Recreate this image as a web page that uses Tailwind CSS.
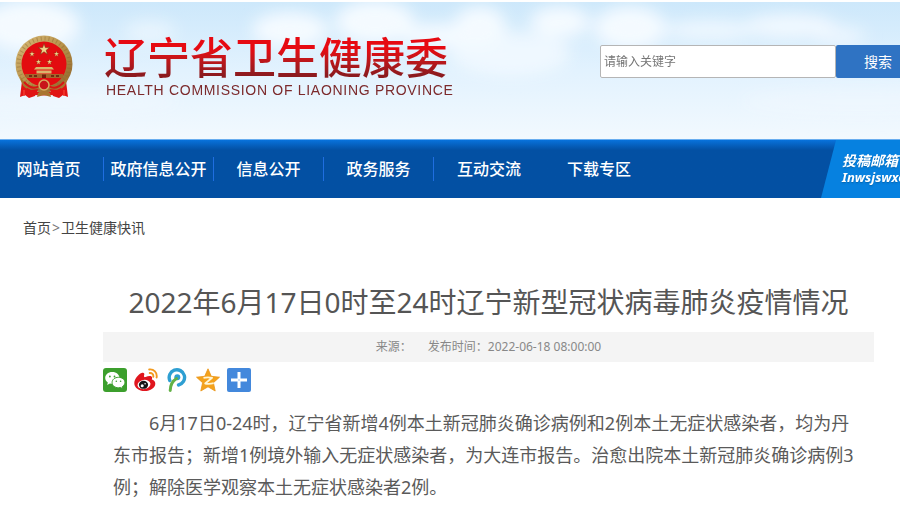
<!DOCTYPE html>
<html lang="zh-CN">
<head>
    <meta charset="UTF-8">
    <meta name="viewport" content="width=device-width, initial-scale=1.0">
    <title>辽宁省卫生健康委</title>
    <script src="https://cdn.jsdelivr.net/npm/@tailwindcss/browser@4"></script>
</head>
<body class="bg-white font-['Noto_Sans','Noto_Sans_CJK_SC',sans-serif] text-[#555] overflow-x-hidden">

    <!-- Header -->
    <header class="relative mt-0.5 h-[137px] overflow-hidden bg-linear-to-b from-[#cde8fb] via-[#e2f2fe] to-[#f2f9fe]">
        <!-- Clouds -->
        <svg class="absolute inset-0 w-full h-full" viewBox="0 0 900 137" preserveAspectRatio="none" aria-hidden="true">
            <defs>
                <filter id="soft" x="-20%" y="-40%" width="140%" height="180%"><feGaussianBlur stdDeviation="8"/></filter>
            </defs>
            <g fill="#f4faff" filter="url(#soft)">
                <ellipse cx="30" cy="24" rx="50" ry="26"/>
                <ellipse cx="150" cy="30" rx="26" ry="12" opacity=".6"/>
                <ellipse cx="290" cy="28" rx="38" ry="18"/>
                <ellipse cx="375" cy="20" rx="40" ry="22"/>
                <ellipse cx="440" cy="34" rx="40" ry="12"/>
                <ellipse cx="480" cy="24" rx="26" ry="20"/>
                <ellipse cx="510" cy="52" rx="60" ry="22" opacity=".8"/>
                <ellipse cx="560" cy="20" rx="30" ry="16"/>
                <ellipse cx="630" cy="26" rx="36" ry="22"/>
                <ellipse cx="710" cy="28" rx="46" ry="10" opacity=".8"/>
                <ellipse cx="790" cy="24" rx="46" ry="12" opacity=".9"/>
                <ellipse cx="840" cy="34" rx="26" ry="10" opacity=".7"/>
                <ellipse cx="60" cy="100" rx="120" ry="12" opacity=".5"/>
                <ellipse cx="860" cy="100" rx="120" ry="14" opacity=".4"/>
            </g>
        </svg>

        <div class="relative flex items-start pl-3.5">
            <svg class="mt-8 w-15 h-[66px] shrink-0" viewBox="0 0 60 66" role="img" aria-label="国徽">
                <defs>
                    <linearGradient id="gold" x1="0" y1="0" x2="1" y2="1">
                        <stop offset="0" stop-color="#d9bd7c"/>
                        <stop offset=".5" stop-color="#b8924a"/>
                        <stop offset="1" stop-color="#8a5f28"/>
                    </linearGradient>
                    <path id="star" d="M0-6 1.4-1.9 5.7-1.9 2.2.7 3.5 4.9 0 2.3-3.5 4.9-2.2.7-5.7-1.9-1.4-1.9z"/>
                </defs>
                <circle cx="30" cy="30" r="28.5" fill="url(#gold)"/>
                <circle cx="30" cy="30" r="25.5" fill="none" stroke="#8f6c31" stroke-width="4" stroke-dasharray="1 3" opacity=".5"/>
                <path d="M8 47 6 63l5-2 4 3 6-2 4-8-8-1zM52 47l2 16-5-2-4 3-6-2-4-8 8-1z" fill="#e01414"/>
                <circle cx="30" cy="30" r="22.500" fill="#e30c10"/>
                <g fill="#f0d58b" stroke="#7f2c0c" stroke-width=".6">
                    <use href="#star" transform="translate(30 15.5)"/>
                    <use href="#star" transform="translate(18 20) scale(.5)"/>
                    <use href="#star" transform="translate(42.5 20) scale(.5)"/>
                    <use href="#star" transform="translate(24.5 28) scale(.5)"/>
                    <use href="#star" transform="translate(35.5 28) scale(.5)"/>
                </g>
                <path d="M22 33h16l2 2.500H20zM22.500 36.500h15v3h-15z" fill="#d9b56c"/>
                <path d="M11 40h38v4H12z" fill="#a5662c"/>
                <path d="M15 42h3M20 42h3M37 42h3M42 42h3" stroke="#5f1a0a" stroke-width="1.500"/>
                <path d="M28 40.500h4V44h-4z" fill="#70200c"/>
                <path d="M6 42q6 11 17 10l5-4h4l5 4q11 1 17-10-1 12-10 14l-9-1-5 4-5-4-9 1Q7 54 6 42z" fill="#a9752f"/>
                <path d="M10 48q8 9 15 4M50 48q-8 9-15 4" fill="none" stroke="#d81414" stroke-width="2"/>
                <circle cx="30" cy="51" r="5" fill="#c8141a" stroke="#d6ad62" stroke-width="1.500"/>
                <path d="M13 54q17 9 34 0l1 5q-18 5-36 0z" fill="#e01414"/>
                <path d="M24 59q6-4 12 0l1 4-7-2-7 2z" fill="#a9752f"/>
                <path d="M10 56v6M50 56v6" stroke="#f4392c" stroke-width="1.500"/>
            </svg>

            <div class="ml-[30px] mt-[34px] shrink-0">
                <h1 class="text-[43px] leading-11 font-medium text-transparent bg-clip-text bg-linear-to-b from-[#e60a12] from-30% to-[#8b1a1e] to-90%">辽宁省卫生健康委</h1>
                <p class="pl-0.5 font-['Liberation_Sans',sans-serif] text-sm leading-5 tracking-wider text-[#7c2a2c]">HEALTH COMMISSION OF LIAONING PROVINCE</p>
            </div>

            <form class="ml-auto -mr-5 mt-[43px] flex shrink-0" onsubmit="return false">
                <input type="search" aria-label="请输入关键字" placeholder="请输入关键字" class="w-[236px] h-[33px] px-[3px] text-xs bg-white border border-[#b5b5b5] rounded-xs placeholder:text-[#757575]">
                <button type="submit" class="w-[84px] h-[33px] text-sm text-white bg-[#2f73c3] rounded-l-xs">搜索</button>
            </form>
        </div>
    </header>

    <!-- Navigation -->
    <nav class="relative h-[59px] overflow-hidden border-t border-[#69aef0] bg-linear-to-b from-[#0872dc] to-[#0350a3] to-[10px]">
        <ul class="-ml-1.5 flex h-[58px] items-center text-base font-medium text-white">
            <li class="w-[110px] h-6 leading-6 text-center border-r border-[#1f6ee0]"><a href="#">网站首页</a></li>
            <li class="w-[110px] h-6 leading-6 text-center border-r border-[#1f6ee0]"><a href="#">政府信息公开</a></li>
            <li class="w-[110px] h-6 leading-6 text-center border-r border-[#1f6ee0]"><a href="#">信息公开</a></li>
            <li class="w-[110px] h-6 leading-6 text-center border-r border-[#1f6ee0]"><a href="#">政务服务</a></li>
            <li class="w-[110px] h-6 leading-6 text-center"><a href="#">互动交流</a></li>
            <li class="w-[110px] h-6 leading-6 text-center"><a href="#">下载专区</a></li>
        </ul>
        <!-- Mailbox banner over the right end of the bar -->
        <a href="#" class="absolute right-0 top-0 flex h-full w-[79px] flex-col justify-center overflow-hidden bg-[#0681e0] pl-[21px] text-[14px] leading-4 font-bold italic text-white whitespace-nowrap text-shadow-sm [clip-path:polygon(15px_0,100%_0,100%_100%,0_100%)]">
            <span>投稿邮箱</span>
            <span class="text-[13px]">Inwsjswxc</span>
        </a>
    </nav>

    <!-- Breadcrumb -->
    <div class="flex gap-px px-[23px] pt-5 text-sm leading-5 text-[#444]">
        <a href="#">首页</a><span class="text-[#777]">&gt;</span><a href="#">卫生健康快讯</a>
    </div>

    <!-- Article -->
    <main class="ml-[103px] mr-[26px] mt-11">
        <h2 class="text-center text-[28px] leading-10 whitespace-nowrap text-[#555]">2022年6月17日0时至24时辽宁新型冠状病毒肺炎疫情情况</h2>

        <div class="mt-2.5 flex h-[30px] items-center justify-center gap-4 bg-[#f4f4f4] text-xs text-[#888]">
            <span>来源：</span>
            <span>发布时间：2022-06-18 08:00:00</span>
        </div>

        <!-- Share buttons -->
        <div class="mt-1.5 flex gap-[7px]">
            <button type="button" aria-label="微信">
                <svg class="size-6" viewBox="0 0 24 24">
                    <rect width="24" height="24" rx="3" fill="#3c9f2d"/>
                    <path d="M9.300 4C5 4 2.200 6.700 2.200 9.900c0 1.900 1 3.400 2.600 4.500L4.200 17l2.700-1.500c.8.2 1.600.3 2.400.3 4.200 0 7.200-2.700 7.200-5.900S13.500 4 9.300 4z" fill="#fff"/>
                    <path d="M15.500 9.300c-3.700 0-6.400 2.300-6.400 5.200 0 3 2.700 5.300 6.400 5.300.8 0 1.500-.1 2.100-.3l2.300 1.300-.5-2.200c1.500-1 2.500-2.400 2.500-4.100 0-2.900-2.800-5.200-6.400-5.200z" fill="#fff" stroke="#3c9f2d"/>
                    <g fill="#3c9f2d"><circle cx="6.900" cy="8.500" r=".9"/><circle cx="11.500" cy="8.500" r=".9"/><circle cx="13.300" cy="13.300" r=".8"/><circle cx="17.600" cy="13.300" r=".8"/></g>
                </svg>
            </button>
            <button type="button" aria-label="新浪微博">
                <svg class="size-6" viewBox="0 0 24 24">
                    <path d="M10 7.500c1-2-.2-3.300-2.400-2.500C4.300 6.200.3 11 .3 15.200c0 4.500 4.700 7.800 10.200 7.800 6.200 0 10.800-3.500 10.800-7.300 0-2.400-1.600-3.600-3.500-4.200.7-2 .2-3.200-1.200-3.500-1.400-.3-3.300.2-5 1-.9.300-1.900.200-1.600-1.500z" fill="#e0161e"/>
                    <ellipse cx="10" cy="16.500" rx="6.500" ry="4.600" fill="#fff" transform="rotate(-8 10 16.500)"/>
                    <ellipse cx="9.500" cy="16.800" rx="4.600" ry="4" fill="#151515"/>
                    <circle cx="8.200" cy="17.800" r="1.500" fill="#fff"/><circle cx="11.100" cy="15.800" r=".8" fill="#fff"/>
                    <path d="M15.200 1.500c4.500-.6 8.300 2.900 7.400 8M15.700 5c2.300-.2 4 1.400 3.600 3.900" fill="none" stroke="#f29a1f" stroke-width="1.900" stroke-linecap="round"/>
                </svg>
            </button>
            <button type="button" aria-label="腾讯微博">
                <svg class="size-6" viewBox="0 0 24 24">
                    <path d="M4.800 12.500A7.700 7.700 0 1 1 13.500 17" fill="none" stroke="#2e9fd2" stroke-width="3.400" stroke-linecap="round"/>
                    <circle cx="12.300" cy="9.200" r="3" fill="#2e9fd2"/>
                    <path d="M11.500 10.500C7.500 13 5.300 17.500 5.200 22.500" fill="none" stroke="#62b146" stroke-width="3" stroke-linecap="round"/>
                </svg>
            </button>
            <button type="button" aria-label="QQ空间">
                <svg class="size-6" viewBox="0 0 24 24">
                    <path d="M12 .8 15.300 8.300 23.500 9.200 17.400 14.700 19.200 23 12 18.800 4.800 23 6.600 14.700.5 9.200 8.700 8.300z" fill="#f4a21c" stroke="#ea9417" stroke-width=".8" stroke-linejoin="round"/>
                    <path d="M7.500 9.800q4.500-.9 8.600 0L9.200 15.500q4 .8 8.500-.3" fill="none" stroke="#fff5d4" stroke-width="1.800" stroke-linejoin="round"/>
                </svg>
            </button>
            <button type="button" aria-label="更多分享">
                <svg class="size-6" viewBox="0 0 24 24">
                    <rect width="24" height="24" rx="2" fill="#4388dc"/>
                    <path d="M12 4v7.500M12 12.500V20M4 12h7.500M12.500 12H20" stroke="#fff" stroke-width="3"/>
                </svg>
            </button>
        </div>

        <p class="mt-[15px] px-2.5 indent-9 text-lg leading-8 text-[#5a5a5a]">6月17日0-24时，辽宁省新增4例本土新冠肺炎确诊病例和2例本土无症状感染者，均为丹东市报告；新增1例境外输入无症状感染者，为大连市报告。治愈出院本土新冠肺炎确诊病例3例；解除医学观察本土无症状感染者2例。</p>
    </main>

</body>
</html>
